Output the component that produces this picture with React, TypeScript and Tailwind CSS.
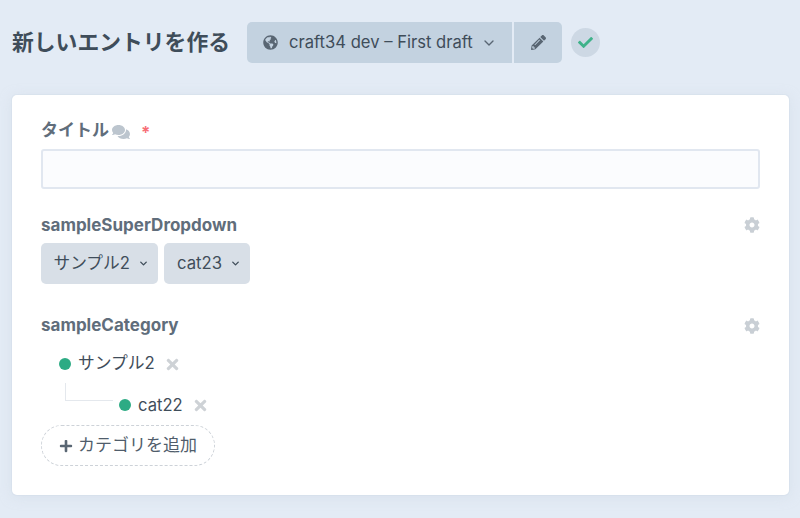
import React from "react";
import { FaGlobeAmericas, FaPencilAlt, FaCheck, FaCog, FaTimes, FaPlus, FaComments } from "react-icons/fa";
import { LuChevronDown } from "react-icons/lu";

const font = "font-['Inter','Noto_Sans_CJK_JP',sans-serif]";

function Label({ children }: { children: React.ReactNode }) {
  return <div className="text-[17px] leading-[20px] font-bold text-[#606d7b]">{children}</div>;
}

function Select({ text }: { text: string }) {
  return (
    <div className="flex items-center h-[41px] pl-[12.5px] pr-[9px] gap-[8.5px] rounded-[5px] bg-[#d8dfe7] text-[16.7px] text-[#3f4d5a]">
      <span>{text}</span>
      <LuChevronDown className="text-[11px]" strokeWidth={3} />
    </div>
  );
}

export default function App() {
  return (
    <div className={`${font} w-[800px] h-[518px] overflow-hidden bg-[#e3ebf5] px-3 pt-[22px]`}>
      <div className="flex items-center h-[41px]">
        <h1 className="text-[21.8px] font-bold text-[#3f4d5a] w-[235px] whitespace-nowrap">新しいエントリを作る</h1>
        <div className="flex items-center h-[41px] w-[265px] pl-4 pr-[15px] rounded-l-[5px] bg-[#c3d2e0] text-[16.6px] text-[#3f4d5a]">
          <FaGlobeAmericas className="text-[15px] text-[#596673] mr-[11px]" />
          <span className="whitespace-nowrap">craft34 dev – First draft</span>
          <LuChevronDown className="text-[16px] ml-auto text-[#596673]" />
        </div>
        <div className="flex items-center justify-center h-[41px] w-[48px] ml-[2px] rounded-r-[5px] bg-[#c3d2e0]">
          <FaPencilAlt className="text-[15px] text-[#596673]" />
        </div>
        <div className="flex items-center justify-center w-[29px] h-[29px] ml-[9px] rounded-full bg-[#cdd8e4]">
          <FaCheck className="text-[15px] text-[#3fb28a]" />
        </div>
      </div>

      <div className="mt-8 w-[777px] h-[400px] rounded-[5px] bg-white px-[29px] pt-6 shadow-[0_0_0_1px_rgba(205,216,228,0.25),0_2px_12px_rgba(205,216,228,0.5)]">
        <div className="flex items-center h-5 pt-[1px]">
          <Label>タイトル</Label>
          <FaComments className="text-[18px] text-[#bcc5ce] ml-[3px] mt-[4px]" />
          <span className="ml-[11px] mt-[7px] text-[16.8px] leading-none text-[#f76e76] font-bold">*</span>
        </div>
        <div className="mt-[10px] h-[40px] rounded-[3px] border-2 border-[#e1e7f0] bg-[#fbfcfe]" />

        <div className="mt-[26px] flex items-center justify-between h-5">
          <Label>sampleSuperDropdown</Label>
          <FaCog className="text-[16px] text-[#c9cfd5]" />
        </div>
        <div className="mt-2 flex gap-[6px]">
          <Select text="サンプル2" />
          <Select text="cat23" />
        </div>

        <div className="mt-[31px] flex items-center justify-between h-5">
          <Label>sampleCategory</Label>
          <FaCog className="text-[16px] text-[#c9cfd5] mt-[2px]" />
        </div>
        <div className="mt-[19px] ml-[18px] flex items-center h-5">
          <span className="w-3 h-3 -mt-[1px] rounded-full bg-[#2dab84]" />
          <span className="ml-[7px] text-[16.8px] text-[#3f4d5a]">サンプル2</span>
          <FaTimes className="ml-[9px] text-[17px] text-[#ced2d6]" />
        </div>
        <div className="relative mt-[21px] ml-[78px] flex items-center h-5">
          <span className="absolute left-[-54px] top-[-12px] w-[48px] h-[18px] border-l border-b border-[#e4e8ed]" />
          <span className="w-3 h-3 -mt-[1px] rounded-full bg-[#2dab84]" />
          <span className="ml-[7px] text-[16.6px] text-[#3f4d5a]">cat22</span>
          <FaTimes className="ml-[9px] text-[17px] text-[#ced2d6]" />
        </div>
        <div className="mt-[10px] flex items-center w-[174px] h-[41px] pl-[17px] rounded-full border border-dashed border-[#cdd2d8] text-[17px] text-[#505d6b]">
          <FaPlus className="text-[14px] mr-[5px] text-[#596673]" />
          <span className="whitespace-nowrap">カテゴリを追加</span>
        </div>
      </div>
    </div>
  );
}
